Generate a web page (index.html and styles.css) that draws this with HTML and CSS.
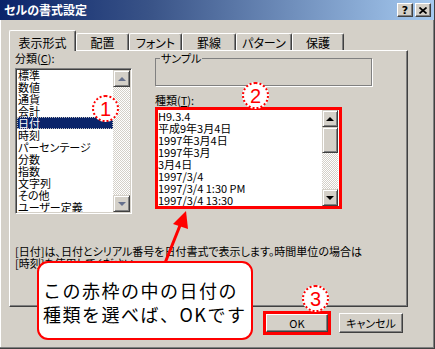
FILE: index.html
```html
<!doctype html>
<html>
<head>
  <meta charset="utf-8" />
  <title>セルの書式設定</title>
  <link rel="stylesheet" href="styles.css">
</head>

<body>
  <div class="window">
    <div class="titlebar">
      <span class="title">セルの書式設定</span>
      <span class="capbtn help">?</span>
      <span class="capbtn"><svg width="8" height="7" viewBox="0 0 8 7"><path d="M0.5 0.5l7 6M7.5 0.5l-7 6" stroke="#000" stroke-width="1.7"/></svg></span>
    </div>

    <div class="body">
      <div class="tabs">
        <div class="tab active">表示形式</div>
        <div class="tab">配置</div>
        <div class="tab">フォント</div>
        <div class="tab">罫線</div>
        <div class="tab">パターン</div>
        <div class="tab">保護</div>
      </div>

      <div class="panel">
        <div class="cols">
          <div class="left">
            <div class="label">分類(<u>C</u>):</div>
            <div class="listbox sunken cat">
              <div class="items">
                <div class="item">標準</div>
                <div class="item">数値</div>
                <div class="item">通貨</div>
                <div class="item">会計</div>
                <div class="item sel">日付</div>
                <div class="item">時刻</div>
                <div class="item">パーセンテージ</div>
                <div class="item">分数</div>
                <div class="item">指数</div>
                <div class="item">文字列</div>
                <div class="item">その他</div>
                <div class="item">ユーザー定義</div>
              </div>
              <div class="vscroll dim">
                <div class="sbtn"><i class="up"></i></div>
                <div class="track"></div>
                <div class="sbtn"><i class="down"></i></div>
              </div>
            </div>
          </div>

          <div class="right">
            <fieldset class="sample"><legend>サンプル</legend></fieldset>
            <div class="label kind">種類(<u>T</u>):</div>
            <div class="redframe">
              <div class="listbox types">
                <div class="items">
                  <div class="item">H9.3.4</div>
                  <div class="item">平成9年3月4日</div>
                  <div class="item">1997年3月4日</div>
                  <div class="item">1997年3月</div>
                  <div class="item">3月4日</div>
                  <div class="item">1997/3/4</div>
                  <div class="item">1997/3/4 1:30 PM</div>
                  <div class="item">1997/3/4 13:30</div>
                </div>
                <div class="vscroll">
                  <div class="sbtn"><i class="up"></i></div>
                  <div class="sbtn thumb"></div>
                  <div class="track"></div>
                  <div class="sbtn"><i class="down"></i></div>
                </div>
              </div>
            </div>
          </div>
        </div>
        <p class="desc">[日付]は、日付とシリアル番号を日付書式で表示します。時間単位の場合は<br>[時刻]を使用してください。</p>
      </div>

      <div class="buttons">
        <div class="redframe okframe"><button class="btn ok">OK</button></div>
        <button class="btn cancel">キャンセル</button>
      </div>
    </div>

    <!-- annotations drawn over the dialog -->
    <svg class="arrow" width="435" height="349" viewBox="0 0 435 349">
      <line x1="165" y1="263" x2="181" y2="223" stroke="#f00" stroke-width="3"/>
      <polygon points="186,211 173,224 188,229" fill="#f00"/>
    </svg>
    <div class="callout">この赤枠の中の日付の<br>種類を選べば、OKです</div>
    <div class="badge b1">1</div>
    <div class="badge b2">2</div>
    <div class="badge b3">3</div>
  </div>
</body>
</html>
```

FILE: styles.css
```css
body {
  margin: 0;
  font: 11px/12px "Noto Sans CJK JP", sans-serif;
  font-feature-settings: "palt";
  color: #000;
}
.window {
  position: relative;
  width: 435px;
  height: 349px;
  box-sizing: border-box;
  background: #d4d0c8;
  border-right: 1px solid #404040;
  border-bottom: 1px solid #404040;
  box-shadow: inset -1px -1px #808080, inset 1px 0 #fff;
}
.titlebar {
  height: 20px;
  display: flex;
  align-items: center;
  padding: 0 3px 0 4px;
  background: linear-gradient(90deg, #0a246a 0%, #3a5488 35%, #a6caf0 100%);
}
.title {
  flex: 1;
  color: #fff;
  font-size: 12px;
  font-weight: 700;
}
.capbtn {
  width: 16px;
  height: 14px;
  box-sizing: border-box;
  display: flex;
  align-items: center;
  justify-content: center;
  background: #d4d0c8;
  border: 1px solid;
  border-color: #fff #404040 #404040 #fff;
  box-shadow: inset -1px -1px #808080;
  font: bold 11px/1 "DejaVu Sans", sans-serif;
}
.capbtn.help {
  margin-right: 2px;
}
.body {
  padding: 10px 0 0 9px;
}
.tabs {
  display: flex;
  align-items: flex-end;
  height: 20px;
  font-size: 12px;
}
.tab {
  height: 17px;
  box-sizing: border-box;
  padding-top: 3px;
  text-align: center;
  border-top: 1px solid #fff;
  border-left: 1px solid #fff;
  border-right: 1px solid #404040;
  box-shadow: inset -1px 0 #808080;
  border-radius: 2px 2px 0 0;
}
.tab.active {
  position: relative;
  z-index: 1;
  height: 21px;
  margin-bottom: -1px;
  padding-top: 6px;
  background: #d4d0c8;
}
.tab:nth-child(1) { width: 67px; }
.tab:nth-child(2) { width: 53px; }
.tab:nth-child(3) { width: 53px; }
.tab:nth-child(4) { width: 54px; }
.tab:nth-child(5) { width: 56px; }
.tab:nth-child(6) { width: 52px; }
.panel {
  width: 399px;
  height: 257px;
  box-sizing: border-box;
  border: 1px solid;
  border-color: #fff #404040 #404040 #fff;
  box-shadow: inset -1px -1px #808080;
  padding: 1px 0 0 5px;
}
.cols {
  display: grid;
  grid-template-columns: 117px 217px;
  column-gap: 23px;
  align-items: start;
}
.label {
  height: 12px;
}
.listbox {
  display: flex;
  box-sizing: border-box;
  background: #fff;
}
.sunken {
  border: 1px solid;
  border-color: #808080 #fff #fff #808080;
  box-shadow: inset 1px 1px #404040, inset -1px -1px #d4d0c8;
  padding: 1px;
}
.cat {
  margin-top: 4px;
  height: 146px;
}
.cat .items {
  margin-top: -1px;
}
.items {
  flex: 1;
  overflow: hidden;
}
.item {
  height: 12px;
  padding-left: 1px;
  white-space: nowrap;
}
.item.sel {
  background: #0a246a;
  color: #fff;
  outline: 1px dotted #c0c0c0;
  outline-offset: -1px;
}
.vscroll {
  width: 17px;
  display: flex;
  flex-direction: column;
}
.sbtn {
  height: 17px;
  box-sizing: border-box;
  display: flex;
  align-items: center;
  justify-content: center;
  background: #d4d0c8;
  border: 1px solid;
  border-color: #d4d0c8 #404040 #404040 #d4d0c8;
  box-shadow: inset 1px 1px #fff, inset -1px -1px #808080;
}
.sbtn .up, .sbtn .down {
  width: 0;
  height: 0;
  border-left: 4px solid transparent;
  border-right: 4px solid transparent;
}
.sbtn .up { border-bottom: 4px solid #000; }
.sbtn .down { border-top: 4px solid #000; }
.dim .sbtn .up { border-bottom-color: #66708c; }
.dim .sbtn .down { border-top-color: #66708c; }
.sbtn.thumb {
  height: 26px;
}
.track {
  flex: 1;
  background: conic-gradient(#fff 25%, #d4d0c8 0 50%, #fff 0 75%, #d4d0c8 0);
  background-size: 2px 2px;
}
.sample {
  margin: 0;
  padding: 0;
  height: 34px;
  box-sizing: border-box;
  border: 1px solid #808080;
  box-shadow: 1px 1px #fff;
}
.sample legend {
  margin-left: 4px;
  padding: 0 1px;
  line-height: 12px;
}
.kind {
  margin-top: 8px;
}
.redframe {
  border: 3px solid #f00;
}
.right .redframe {
  width: 187px;
  height: 102px;
  box-sizing: border-box;
  margin-top: 1px;
}
.types {
  height: 96px;
  padding-right: 1px;
}
.types .item {
  padding-left: 0;
}
.types .vscroll {
  width: 16px;
}
.desc {
  margin: 31px 0 0;
}
.buttons {
  display: flex;
  justify-content: flex-end;
  align-items: center;
  gap: 8px;
  margin-top: 4px;
  padding-right: 31px;
}
.okframe {
  height: 24px;
  box-sizing: border-box;
  display: flex;
}
.btn {
  padding: 0;
  font: inherit;
  background: #d4d0c8;
  border: 1px solid;
  border-color: #fff #404040 #404040 #fff;
  box-shadow: inset -1px -1px #808080;
}
.btn.ok {
  width: 62px;
  height: 18px;
}
.btn.cancel {
  width: 64px;
  height: 20px;
}
.arrow {
  position: absolute;
  left: 0;
  top: 0;
}
.callout {
  position: absolute;
  left: 37px;
  top: 261px;
  width: 216px;
  height: 79px;
  box-sizing: border-box;
  padding: 15px 0 0 4px;
  background: #fff;
  border: 2px solid #f00;
  border-radius: 11px;
  font-size: 18px;
  line-height: 24px;
  letter-spacing: 1.5px;
  font-feature-settings: normal;
}
.badge {
  position: absolute;
  width: 27px;
  height: 27px;
  box-sizing: border-box;
  display: flex;
  align-items: center;
  justify-content: center;
  border: 2px dotted #f00;
  border-radius: 50%;
  background: #fff;
  color: #f00;
  font: 20px/1 "Liberation Sans", sans-serif;
}
.b1 { left: 92px; top: 95px; }
.b2 { left: 242px; top: 82px; }
.b3 { left: 302px; top: 285px; }
```
